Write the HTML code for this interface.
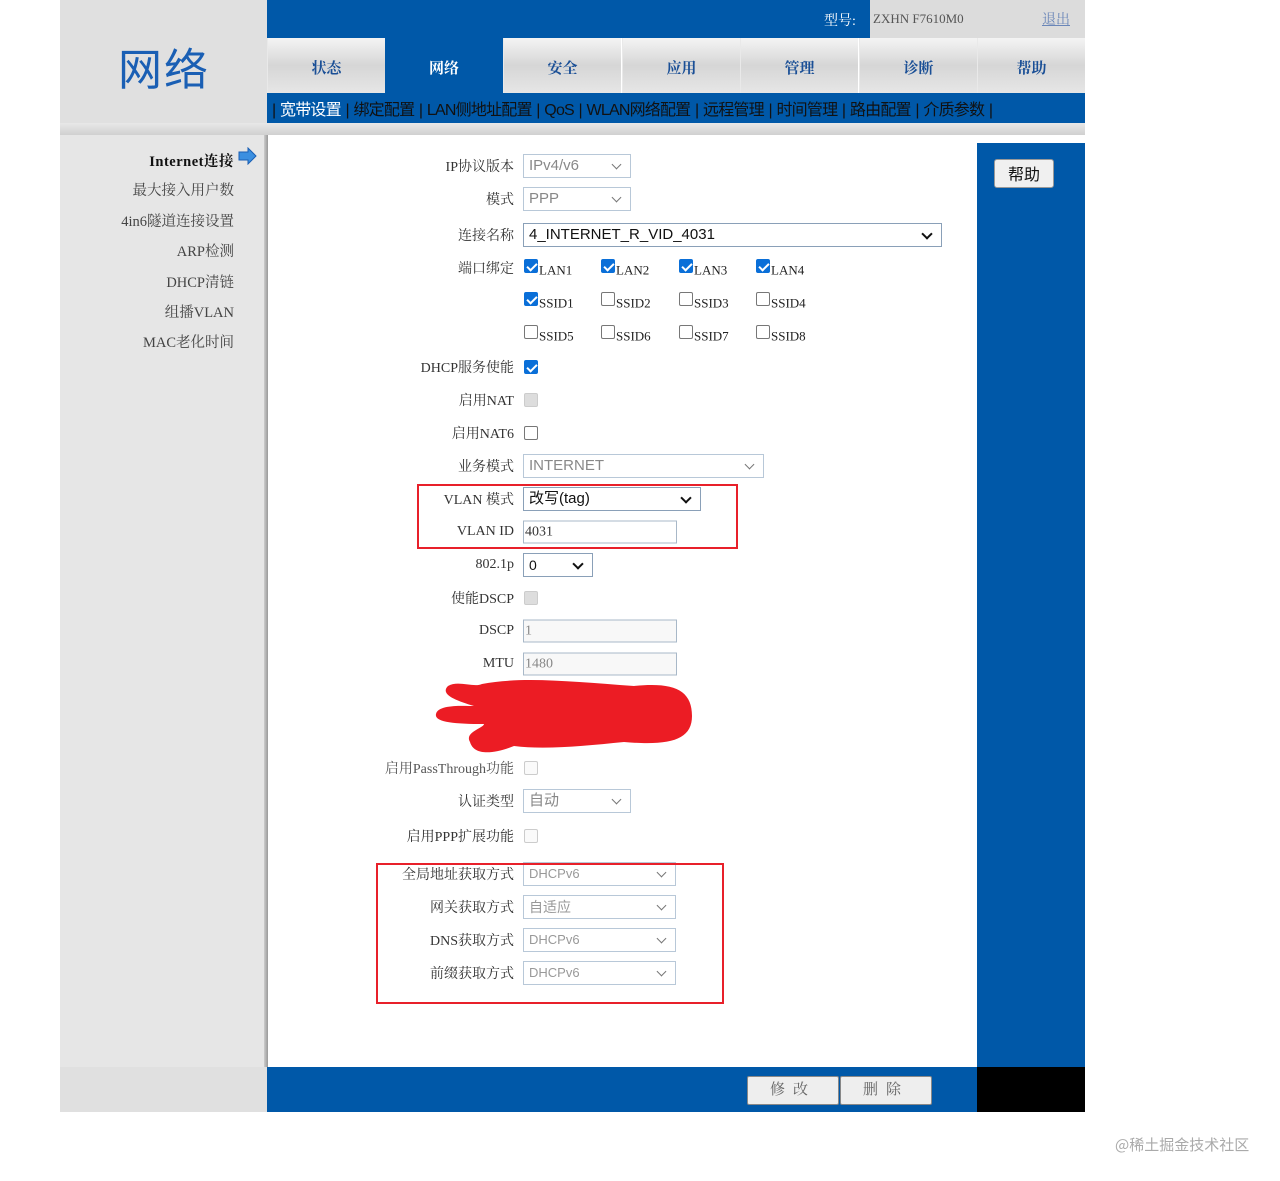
<!DOCTYPE html>
<html><head><meta charset="utf-8"><style>
*{margin:0;padding:0;box-sizing:border-box}
body{width:1280px;height:1181px;background:#fff;position:relative;overflow:hidden;font-family:"Liberation Serif","Noto Serif CJK SC",serif;font-size:14px;color:#333}
.a{position:absolute}
.tab{position:absolute;top:38px;height:55px;width:118px;background:linear-gradient(#f4f4f4,#d6d6d6 50%,#e6e6e6);color:#1a4f96;font-weight:bold;font-size:15px;text-align:center;line-height:62px;border-left:1px solid #e9e9e9}
.lbl{position:absolute;right:766px;font-size:14px;color:#333;white-space:nowrap;transform:translateY(-50%)}
.sel{position:absolute;left:523px;height:24px;border:1px solid #b8c8d8;background:#fff;font-family:"Liberation Sans","Noto Sans CJK SC",sans-serif;font-size:15px;padding-left:5px;line-height:22px;color:#888;transform:translateY(-50%)}
.sel.d{color:#999;font-size:13px}
.sel::after{content:"";position:absolute;right:10px;top:6px;width:6px;height:6px;border-right:1.5px solid #777;border-bottom:1.5px solid #777;transform:rotate(45deg)}
.sel.k{color:#111;border-color:#8aa0b8}.sel.k::after{border-color:#111;border-width:2px}
.inp{position:absolute;left:523px;height:23px;border:1px solid #a8b8c8;background:#fff;font-size:14px;line-height:21px;padding-left:1px;transform:translateY(-50%)}
.cb{position:absolute;width:14px;height:14px;border:1px solid #777;border-radius:2px;background:#fff;transform:translateY(-50%)}
.cb.on{background:#0a6fd8;border-color:#0a6fd8}
.cb.on::after{content:"";position:absolute;left:4px;top:1px;width:4px;height:8px;border-right:2px solid #fff;border-bottom:2px solid #fff;transform:rotate(45deg)}
.cb.g{background:#ddd;border-color:#ccc}
.cb.e{border-color:#ccc;background:#fafafa}
.ct{position:absolute;font-size:13px;color:#222;transform:translateY(-40%)}
.side{position:absolute;right:1046px;font-size:14.5px;color:#444;white-space:nowrap}
</style></head><body>
<div class="a" style="left:60px;top:0;width:207px;height:123px;background:#e0e0e0"></div>
<div class="a" style="left:118px;top:34px;font-size:44px;color:#1a5fb4;font-family:'Noto Sans CJK SC',sans-serif;letter-spacing:2px">网络</div>
<div class="a" style="left:267px;top:0;width:818px;height:38px;background:#0058a8"></div>
<div class="a" style="left:870px;top:0;width:215px;height:38px;background:#dcdcdc"></div>
<div class="a" style="left:824px;top:10px;color:#fff;font-size:14px">型号:</div>
<div class="a" style="left:873px;top:11px;color:#555;font-size:13px">ZXHN F7610M0</div>
<div class="a" style="left:1042px;top:9px;color:#6a86b8;font-size:14px;text-decoration:underline">退出</div>
<div class="tab" style="left:267px">状态</div>
<div class="tab" style="left:385px;background:#0058a8;color:#fff;border:none">网络</div>
<div class="tab" style="left:503px">安全</div>
<div class="tab" style="left:622px">应用</div>
<div class="tab" style="left:740px">管理</div>
<div class="tab" style="left:859px">诊断</div>
<div class="tab" style="left:977px;width:108px">帮助</div>
<div class="a" style="left:267px;top:93px;width:818px;height:30px;background:#0058a8"></div>
<div class="a" style="left:272px;top:96px;font-family:'Liberation Sans','Noto Sans CJK SC',sans-serif;font-size:16px;color:#111;letter-spacing:-0.8px;word-spacing:1px;white-space:nowrap">| <span style="color:#fff">宽带设置</span> | 绑定配置 | LAN侧地址配置 | QoS | WLAN网络配置 | 远程管理 | 时间管理 | 路由配置 | 介质参数 |</div>
<div class="a" style="left:60px;top:123px;width:1025px;height:12px;background:linear-gradient(#e8e8e8,#d0d0d0)"></div>
<div class="a" style="left:60px;top:135px;width:207px;height:932px;background:#e6e6e6"></div>
<div class="a" style="left:264px;top:135px;width:4px;height:932px;background:linear-gradient(90deg,#ccc,#999)"></div>
<div class="side" style="top:150px;color:#111;font-weight:bold;letter-spacing:0.5px">Internet连接</div>
<svg class="a" style="left:238px;top:147px" width="19" height="18"><path d="M1 5h9V1l8 8-8 8v-4H1z" fill="#3b8fe0" stroke="#1a5fb4"/></svg>
<div class="side" style="top:179px">最大接入用户数</div>
<div class="side" style="top:210px">4in6隧道连接设置</div>
<div class="side" style="top:240px">ARP检测</div>
<div class="side" style="top:271px">DHCP清链</div>
<div class="side" style="top:301px">组播VLAN</div>
<div class="side" style="top:331px">MAC老化时间</div>
<div class="a" style="left:977px;top:143px;width:108px;height:924px;background:#0058a8"></div>
<div class="a" style="left:994px;top:159px;width:60px;height:29px;background:#f0f0f0;border:1px solid #999;border-radius:3px;text-align:center;line-height:27px;font-family:'Noto Sans CJK SC',sans-serif;font-size:16px;color:#111">帮助</div>
<div class="a" style="left:60px;top:1067px;width:207px;height:45px;background:#e0e0e0"></div>
<div class="a" style="left:267px;top:1067px;width:710px;height:45px;background:#0058a8"></div>
<div class="a" style="left:977px;top:1067px;width:108px;height:45px;background:#000"></div>
<div class="a" style="left:747px;top:1076px;width:92px;height:29px;background:#eee;border:1px solid #888;border-radius:2px;text-align:center;line-height:27px;color:#666;font-size:15px;letter-spacing:8px">修改</div>
<div class="a" style="left:840px;top:1076px;width:92px;height:29px;background:#eee;border:1px solid #888;border-radius:2px;text-align:center;line-height:27px;color:#666;font-size:15px;letter-spacing:8px">删除</div>
<div class="a" style="left:1115px;top:1134px;color:#aaa;font-family:'Noto Sans CJK SC',sans-serif;font-size:15px">@稀土掘金技术社区</div>
<div class="lbl" style="top:166px">IP协议版本</div><div class="sel" style="top:166px;width:108px">IPv4/v6</div>
<div class="lbl" style="top:199px">模式</div><div class="sel" style="top:199px;width:108px">PPP</div>
<div class="lbl" style="top:235px">连接名称</div><div class="sel k" style="top:235px;width:419px;font-size:15px">4_INTERNET_R_VID_4031</div>
<div class="lbl" style="top:268px">端口绑定</div>
<div class="cb on" style="left:524px;top:266px"></div><div class="ct" style="left:539px;top:269px">LAN1</div>
<div class="cb on" style="left:601px;top:266px"></div><div class="ct" style="left:616px;top:269px">LAN2</div>
<div class="cb on" style="left:679px;top:266px"></div><div class="ct" style="left:694px;top:269px">LAN3</div>
<div class="cb on" style="left:756px;top:266px"></div><div class="ct" style="left:771px;top:269px">LAN4</div>
<div class="cb on" style="left:524px;top:299px"></div><div class="ct" style="left:539px;top:302px">SSID1</div>
<div class="cb" style="left:601px;top:299px"></div><div class="ct" style="left:616px;top:302px">SSID2</div>
<div class="cb" style="left:679px;top:299px"></div><div class="ct" style="left:694px;top:302px">SSID3</div>
<div class="cb" style="left:756px;top:299px"></div><div class="ct" style="left:771px;top:302px">SSID4</div>
<div class="cb" style="left:524px;top:332px"></div><div class="ct" style="left:539px;top:335px">SSID5</div>
<div class="cb" style="left:601px;top:332px"></div><div class="ct" style="left:616px;top:335px">SSID6</div>
<div class="cb" style="left:679px;top:332px"></div><div class="ct" style="left:694px;top:335px">SSID7</div>
<div class="cb" style="left:756px;top:332px"></div><div class="ct" style="left:771px;top:335px">SSID8</div>
<div class="lbl" style="top:367px">DHCP服务使能</div><div class="cb on" style="left:524px;top:367px"></div>
<div class="lbl" style="top:400px">启用NAT</div><div class="cb g" style="left:524px;top:400px"></div>
<div class="lbl" style="top:433px">启用NAT6</div><div class="cb" style="left:524px;top:433px"></div>
<div class="lbl" style="top:466px">业务模式</div><div class="sel" style="top:466px;width:241px">INTERNET</div>
<div class="lbl" style="top:499px">VLAN 模式</div><div class="sel k" style="top:499px;width:178px">改写(tag)</div>
<div class="lbl" style="top:532px">VLAN ID</div><div class="inp" style="top:532px;width:154px">4031</div>
<div class="lbl" style="top:565px">802.1p</div><div class="sel k" style="top:565px;width:70px;font-size:14px">0</div>
<div class="lbl" style="top:598px">使能DSCP</div><div class="cb g" style="left:524px;top:598px"></div>
<div class="lbl" style="top:631px">DSCP</div><div class="inp" style="top:631px;width:154px;background:#f8f8f8;color:#888">1</div>
<div class="lbl" style="top:664px">MTU</div><div class="inp" style="top:664px;width:154px;background:#f8f8f8;color:#888">1480</div>
<svg class="a" style="left:434px;top:676px" width="262" height="80"><path d="M48 8C90 0 140 6 200 10C240 6 258 14 258 40C258 64 236 70 190 66C150 70 110 74 80 70C60 78 40 80 36 66C30 56 50 52 50 48C20 48 0 46 2 38C4 28 30 30 40 30C20 24 6 18 14 10C24 4 40 12 48 8Z" fill="#ec1c24"/></svg>
<div class="lbl" style="top:768px;color:#555">启用PassThrough功能</div><div class="cb e" style="left:524px;top:768px"></div>
<div class="lbl" style="top:801px">认证类型</div><div class="sel" style="top:801px;width:108px">自动</div>
<div class="lbl" style="top:836px">启用PPP扩展功能</div><div class="cb e" style="left:524px;top:836px"></div>
<div class="lbl" style="top:874px">全局地址获取方式</div><div class="sel d" style="top:874px;width:153px">DHCPv6</div>
<div class="lbl" style="top:907px">网关获取方式</div><div class="sel d" style="top:907px;width:153px;font-size:14px">自适应</div>
<div class="lbl" style="top:940px">DNS获取方式</div><div class="sel d" style="top:940px;width:153px">DHCPv6</div>
<div class="lbl" style="top:973px">前缀获取方式</div><div class="sel d" style="top:973px;width:153px">DHCPv6</div>
<div class="a" style="left:417px;top:484px;width:321px;height:65px;border:2px solid #e8202a"></div>
<div class="a" style="left:376px;top:863px;width:348px;height:141px;border:2px solid #e8202a"></div>
</body></html>
